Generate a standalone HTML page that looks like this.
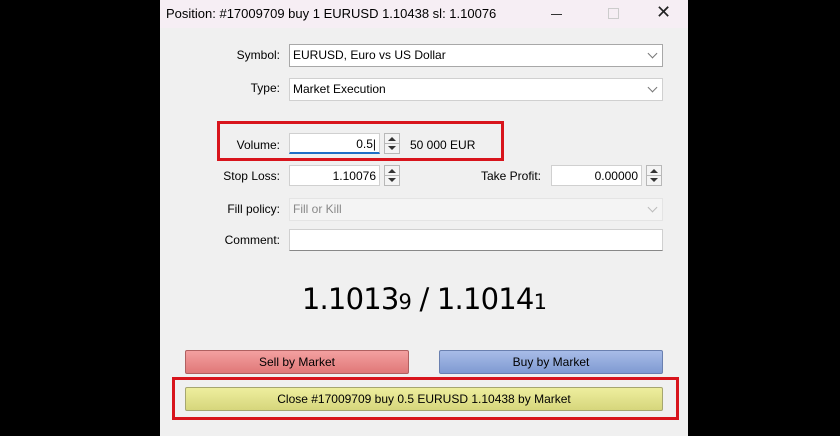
<!DOCTYPE html><html><head><style>
body{margin:0;width:840px;height:436px;background:#000;position:relative;overflow:hidden;font-family:"Liberation Sans",sans-serif;font-size:12px;color:#000}
.d{position:absolute;left:160px;top:0;width:528px;height:436px;background:#f0f0f0}
.t{position:absolute;left:160px;top:0;width:528px;height:28px;background:#f6eef4}
.a{position:absolute}
.lbl{position:absolute;text-align:right;width:120px;font-size:12px}
.in{position:absolute;background:#fff;border:1px solid #d0d0d0;box-sizing:border-box;font-size:12px;line-height:20px;padding:0 3px}
.sp{position:absolute;width:16px;height:21px;border:1px solid #b8b8b8;box-sizing:border-box;background:#f4f4f4}
.sp:before{content:"";position:absolute;left:3px;top:3px;border:4px solid transparent;border-bottom:4px solid #333;border-top:0}
.sp:after{content:"";position:absolute;left:3px;top:12px;border:4px solid transparent;border-top:4px solid #333;border-bottom:0}
.sp i{position:absolute;left:0;right:0;top:9px;border-top:1px solid #b8b8b8}
.ch{position:absolute;right:6px;top:5px;width:6px;height:6px;border-right:1px solid #777;border-bottom:1px solid #777;transform:rotate(45deg)}
.btn{position:absolute;height:24px;box-sizing:border-box;border:1px solid #999;border-radius:2px;text-align:center;line-height:22px;font-size:12px}
.red{position:absolute;border:3px solid #d8141c;box-sizing:border-box}
</style></head><body>
<div class="d"></div><div class="t"></div>
<div class="a" style="left:166px;top:6px;font-size:13px">Position: #17009709 buy 1 EURUSD 1.10438 sl: 1.10076</div>
<div class="a" style="left:551px;top:14px;width:11px;border-top:1px solid #333"></div>
<div class="a" style="left:608px;top:8px;width:9px;height:9px;border:1px solid #ccc"></div>
<div class="a" style="left:656px;top:2px;font-size:18px;color:#222">✕</div>

<div class="lbl" style="left:160px;top:48px">Symbol:</div>
<div class="in" style="left:289px;top:44px;width:374px;height:23px;border-color:#a8a8a8">EURUSD, Euro vs US Dollar<span class="ch"></span></div>
<div class="lbl" style="left:160px;top:81px">Type:</div>
<div class="in" style="left:289px;top:78px;width:374px;height:23px">Market Execution<span class="ch"></span></div>

<div class="red" style="left:217px;top:121px;width:287px;height:40px"></div>
<div class="lbl" style="left:160px;top:138px">Volume:</div>
<div class="in" style="left:289px;top:133px;width:91px;height:21px;text-align:right;border-bottom:2px solid #1f6fc6">0.5|</div>
<div class="sp" style="left:384px;top:133px"><i></i></div>
<div class="a" style="left:410px;top:138px">50 000 EUR</div>

<div class="lbl" style="left:160px;top:169px">Stop Loss:</div>
<div class="in" style="left:289px;top:165px;width:91px;height:21px;text-align:right">1.10076</div>
<div class="sp" style="left:384px;top:165px"><i></i></div>
<div class="lbl" style="left:421px;top:169px">Take Profit:</div>
<div class="in" style="left:551px;top:165px;width:91px;height:21px;text-align:right">0.00000</div>
<div class="sp" style="left:646px;top:165px"><i></i></div>

<div class="lbl" style="left:160px;top:202px">Fill policy:</div>
<div class="in" style="left:289px;top:198px;width:374px;height:23px;color:#888;background:#f4f4f4;border-color:#e4e4e4">Fill or Kill<span class="ch" style="border-color:#bbb"></span></div>
<div class="lbl" style="left:160px;top:233px">Comment:</div>
<div class="in" style="left:289px;top:229px;width:374px;height:22px;border-bottom-color:#888"></div>

<div class="a" style="left:160px;width:528px;top:282px;text-align:center;font-family:'DejaVu Sans',sans-serif;font-size:29px;letter-spacing:-0.8px">1.1013<span style="font-size:21px">9</span> / 1.1014<span style="font-size:21px">1</span></div>

<div class="btn" style="left:185px;top:350px;width:224px;background:linear-gradient(#f3a0a0,#e07878);border-color:#b06060">Sell by Market</div>
<div class="btn" style="left:439px;top:350px;width:224px;background:linear-gradient(#a8bce8,#7f9ad2);border-color:#6a80b0">Buy by Market</div>
<div class="red" style="left:172px;top:377px;width:507px;height:43px"></div>
<div class="btn" style="left:185px;top:387px;width:478px;background:linear-gradient(#eeee9e,#d6d67c);border-color:#a6a670">Close #17009709 buy 0.5 EURUSD 1.10438 by Market</div>
</body></html>
